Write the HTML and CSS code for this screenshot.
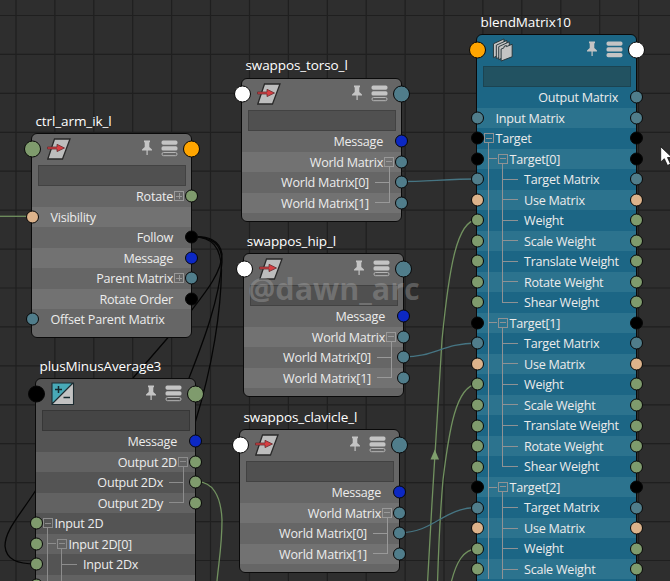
FILE: index.html
```
<!DOCTYPE html>
<html lang="en">
<head>
<meta charset="utf-8">
<title>Node Editor</title>
<link rel="stylesheet" href="styles.css">
</head>
<body>
<svg class="defs" width="0" height="0" aria-hidden="true">
  <symbol id="transform" viewBox="0 0 24 22">
    <path d="M7.500 1H23L15.500 21H.8Z" fill="#bdbdbd" stroke="#292929" stroke-width="1.300"/>
    <path d="M.5 9H10V6.300L17.500 10 10 13.600V11H.5Z" fill="#d83e42" stroke="#662c2e" stroke-width=".8"/>
  </symbol>
  <symbol id="plusminus" viewBox="0 0 24 24">
    <path d="M1 1H22V22H1Z" fill="#c2c2c2"/>
    <path d="M1 1H22L1 22Z" fill="#48a9b7"/>
    <path d="M1 1H22.500V22.500H1ZM22 1L1 22" fill="none" stroke="#1c2b30" stroke-width="1.100"/>
    <path d="M4 7.500H11M7.500 4V11M12.500 15.500H19" fill="none" stroke="#15282d" stroke-width="1.500"/>
  </symbol>
  <symbol id="layers" viewBox="0 0 24 25">
    <g fill="#c4c4c4" stroke="#26343a" stroke-width="1">
      <path d="M1 6L12 1V15L1 20.500Z"/>
      <path d="M4 7.500L15 2.500V17L4 21.500Z"/>
      <path d="M6.500 9L17.500 4V18L6.500 22.500Z"/>
      <path d="M9 11.500L12 10.200V8.800L14.500 7.800V9L20.500 6.500V19.500L9 24Z"/>
    </g>
  </symbol>
  <symbol id="pin" viewBox="0 0 10 16">
    <path d="M2 .5H8V2L7.300 2.500V7L10 9.500V10.500H5.700V15H4.500V10.500H0V9.500L2.700 7V2.500L2 2Z" fill="#c4c4c4"/>
  </symbol>
  <symbol id="list" viewBox="0 0 17 17">
    <rect x=".5" y=".5" width="16" height="4.300" rx="1.700" fill="#c4c4c4"/>
    <rect x=".5" y="6.300" width="16" height="4.300" rx="1.700" fill="#c4c4c4"/>
    <rect x="1" y="12.500" width="15" height="3.200" rx="1.500" fill="none" stroke="#b5b5b5"/>
  </symbol>
  <symbol id="list-full" viewBox="0 0 17 17">
    <rect x=".5" y=".5" width="16" height="4.300" rx="1.700" fill="#c4c4c4"/>
    <rect x=".5" y="6.300" width="16" height="4.300" rx="1.700" fill="#c4c4c4"/>
    <rect x=".5" y="12" width="16" height="4.300" rx="1.700" fill="#c4c4c4"/>
  </symbol>
</svg>

<main class="canvas">
  <svg class="edges" viewBox="0 0 670 581" width="670" height="581">
    <path class="grid" d="M16 0V581M54.900 0V581M93.800 0V581M132.700 0V581M171.600 0V581M210.500 0V581M249.500 0V581M288.400 0V581M327.300 0V581M366.200 0V581M405.100 0V581M444 0V581M482.900 0V581M521.800 0V581M560.800 0V581M599.700 0V581M638.600 0V581M0 15.500H670M0 54.400H670M0 93.400H670M0 132.300H670M0 171.200H670M0 210.200H670M0 249.100H670M0 288H670M0 326.900H670M0 365.900H670M0 404.800H670M0 443.700H670M0 482.700H670M0 521.600H670M0 560.500H670"/>
    <g class="wire green">
      <path d="M0 216.300H31"/>
      <path d="M196 482C212 481 221 495 222 520C222 545 219 560 217 581"/>
      <path d="M477 220C457 220 449 268 442 340C438 400 432 500 427.500 583"/>
      <path d="M477 384C456 386 449 430 443 480C439.500 520 438.500 550 437.500 583"/>
      <path d="M477 549C463 549 456 563 451 583"/>
    </g>
    <path class="arrow" d="M434.800 449.500L439 459.500H430.500Z"/>
    <g class="wire teal-wire">
      <path d="M401 181.500C425 181.500 450 179 477 179"/>
      <path d="M403 357C435 357 442 343.500 477 343"/>
      <path d="M399 532.700C435 532.700 442 508 477 507.500"/>
    </g>
    <g class="wire black-wire">
      <path d="M191 237C207 235 220 240 222 254C222 272 205 293 191 311L133 378"/>
      <path d="M191 237C212 236 222 244 222 262C219 300 204 340 189 378"/>
      <path d="M191 237C213 236 221 248 221.500 270C221 310 213 365 195 423"/>
      <path d="M36 490C20 515 5 530 5 546C6 560 18 564 36 564"/>
    </g>
  </svg>

  <section class="node ctrl">
    <h2>ctrl_arm_ik_l</h2>
    <header><i class="port in green"></i><svg class="kind"><use href="#transform"/></svg><svg class="pin"><use href="#pin"/></svg><svg class="list"><use href="#list"/></svg><i class="port out orange"></i></header>
    <div class="field"></div>
    <div class="rows">
      <div class="row"><span class="label r0">Rotate</span><i class="box plus right"></i><i class="port out green"></i></div>
      <div class="row"><i class="port in peach"></i><span class="label l0">Visibility</span></div>
      <div class="row"><span class="label r0">Follow</span><i class="port out black"></i></div>
      <div class="row"><span class="label r0">Message</span><i class="port out blue"></i></div>
      <div class="row"><span class="label r0">Parent Matrix</span><i class="box plus right"></i><i class="port out teal"></i></div>
      <div class="row"><span class="label r0">Rotate Order</span><i class="port out black"></i></div>
      <div class="row"><i class="port in teal"></i><span class="label l0">Offset Parent Matrix</span></div>
    </div>
  </section>

  <section class="node plus-minus dark">
    <h2>plusMinusAverage3</h2>
    <header><i class="port in black"></i><svg class="kind"><use href="#plusminus"/></svg><svg class="pin"><use href="#pin"/></svg><svg class="list"><use href="#list"/></svg><i class="port out green"></i></header>
    <div class="field"></div>
    <div class="rows">
      <div class="row"><span class="label r0">Message</span><i class="port out blue"></i></div>
      <div class="row"><span class="label r0">Output 2D</span><i class="stub right"></i><i class="box right"></i><i class="port out green"></i></div>
      <div class="row"><span class="label r1">Output 2Dx</span><i class="branch right"></i><i class="port out green"></i></div>
      <div class="row"><span class="label r1">Output 2Dy</span><i class="branch right last"></i><i class="port out green"></i></div>
      <div class="row"><i class="port in green"></i><i class="stub"></i><i class="box"></i><span class="label l0">Input 2D</span></div>
      <div class="row"><i class="port in green"></i><i class="branch outer"></i><i class="stub deep"></i><i class="box deep"></i><span class="label l1">Input 2D[0]</span></div>
      <div class="row trunk"><i class="port in green"></i><i class="branch"></i><span class="label l2">Input 2Dx</span></div>
      <div class="row trunk"><i class="port in green"></i><i class="branch"></i></div>
    </div>
  </section>

  <section class="node torso">
    <h2>swappos_torso_l</h2>
    <header><i class="port in white"></i><svg class="kind"><use href="#transform"/></svg><svg class="pin"><use href="#pin"/></svg><svg class="list"><use href="#list"/></svg><i class="port out teal"></i></header>
    <div class="field"></div>
    <div class="rows">
      <div class="row"><span class="label r0">Message</span><i class="port out blue"></i></div>
      <div class="row"><span class="label r0">World Matrix</span><i class="stub right"></i><i class="box right"></i><i class="port out teal"></i></div>
      <div class="row"><span class="label r1">World Matrix[0]</span><i class="branch right"></i><i class="port out teal"></i></div>
      <div class="row"><span class="label r1">World Matrix[1]</span><i class="branch right last"></i><i class="port out teal"></i></div>
    </div>
  </section>

  <section class="node hip">
    <h2>swappos_hip_l</h2>
    <header><i class="port in white"></i><svg class="kind"><use href="#transform"/></svg><svg class="pin"><use href="#pin"/></svg><svg class="list"><use href="#list"/></svg><i class="port out teal"></i></header>
    <div class="field"></div>
    <div class="rows">
      <div class="row"><span class="label r0">Message</span><i class="port out blue"></i></div>
      <div class="row"><span class="label r0">World Matrix</span><i class="stub right"></i><i class="box right"></i><i class="port out teal"></i></div>
      <div class="row"><span class="label r1">World Matrix[0]</span><i class="branch right"></i><i class="port out teal"></i></div>
      <div class="row"><span class="label r1">World Matrix[1]</span><i class="branch right last"></i><i class="port out teal"></i></div>
    </div>
  </section>

  <section class="node clavicle">
    <h2>swappos_clavicle_l</h2>
    <header><i class="port in white"></i><svg class="kind"><use href="#transform"/></svg><svg class="pin"><use href="#pin"/></svg><svg class="list"><use href="#list"/></svg><i class="port out teal"></i></header>
    <div class="field"></div>
    <div class="rows">
      <div class="row"><span class="label r0">Message</span><i class="port out blue"></i></div>
      <div class="row"><span class="label r0">World Matrix</span><i class="stub right"></i><i class="box right"></i><i class="port out teal"></i></div>
      <div class="row"><span class="label r1">World Matrix[0]</span><i class="branch right"></i><i class="port out teal"></i></div>
      <div class="row"><span class="label r1">World Matrix[1]</span><i class="branch right last"></i><i class="port out teal"></i></div>
    </div>
  </section>

  <section class="node blend">
    <h2>blendMatrix10</h2>
    <header><i class="port in orange"></i><svg class="kind"><use href="#layers"/></svg><svg class="pin"><use href="#pin"/></svg><svg class="list"><use href="#list-full"/></svg><i class="port out white"></i></header>
    <div class="field"></div>
    <div class="rows">
      <div class="row"><span class="label r0">Output Matrix</span><i class="port out teal"></i></div>
      <div class="row"><i class="port in teal"></i><span class="label l0">Input Matrix</span><i class="port out teal"></i></div>
      <div class="row"><i class="port in black"></i><i class="stub"></i><i class="box"></i><span class="label l0">Target</span><i class="port out black"></i></div>
      <div class="row"><i class="port in black"></i><i class="branch outer"></i><i class="stub deep"></i><i class="box deep"></i><span class="label l1">Target[0]</span><i class="port out black"></i></div>
      <div class="row trunk"><i class="port in teal"></i><i class="branch"></i><span class="label l2">Target Matrix</span><i class="port out teal"></i></div>
      <div class="row trunk"><i class="port in peach"></i><i class="branch"></i><span class="label l2">Use Matrix</span><i class="port out peach"></i></div>
      <div class="row trunk"><i class="port in green"></i><i class="branch"></i><span class="label l2">Weight</span><i class="port out green"></i></div>
      <div class="row trunk"><i class="port in green"></i><i class="branch"></i><span class="label l2">Scale Weight</span><i class="port out green"></i></div>
      <div class="row trunk"><i class="port in green"></i><i class="branch"></i><span class="label l2">Translate Weight</span><i class="port out green"></i></div>
      <div class="row trunk"><i class="port in green"></i><i class="branch"></i><span class="label l2">Rotate Weight</span><i class="port out green"></i></div>
      <div class="row trunk"><i class="port in green"></i><i class="branch last"></i><span class="label l2">Shear Weight</span><i class="port out green"></i></div>
      <div class="row"><i class="port in black"></i><i class="branch outer"></i><i class="stub deep"></i><i class="box deep"></i><span class="label l1">Target[1]</span><i class="port out black"></i></div>
      <div class="row trunk"><i class="port in teal"></i><i class="branch"></i><span class="label l2">Target Matrix</span><i class="port out teal"></i></div>
      <div class="row trunk"><i class="port in peach"></i><i class="branch"></i><span class="label l2">Use Matrix</span><i class="port out peach"></i></div>
      <div class="row trunk"><i class="port in green"></i><i class="branch"></i><span class="label l2">Weight</span><i class="port out green"></i></div>
      <div class="row trunk"><i class="port in green"></i><i class="branch"></i><span class="label l2">Scale Weight</span><i class="port out green"></i></div>
      <div class="row trunk"><i class="port in green"></i><i class="branch"></i><span class="label l2">Translate Weight</span><i class="port out green"></i></div>
      <div class="row trunk"><i class="port in green"></i><i class="branch"></i><span class="label l2">Rotate Weight</span><i class="port out green"></i></div>
      <div class="row trunk"><i class="port in green"></i><i class="branch last"></i><span class="label l2">Shear Weight</span><i class="port out green"></i></div>
      <div class="row"><i class="port in black"></i><i class="branch outer"></i><i class="stub deep"></i><i class="box deep"></i><span class="label l1">Target[2]</span><i class="port out black"></i></div>
      <div class="row trunk"><i class="port in teal"></i><i class="branch"></i><span class="label l2">Target Matrix</span><i class="port out teal"></i></div>
      <div class="row trunk"><i class="port in peach"></i><i class="branch"></i><span class="label l2">Use Matrix</span><i class="port out peach"></i></div>
      <div class="row trunk"><i class="port in green"></i><i class="branch"></i><span class="label l2">Weight</span><i class="port out green"></i></div>
      <div class="row trunk"><i class="port in green"></i><i class="branch"></i><span class="label l2">Scale Weight</span><i class="port out green"></i></div>
    </div>
  </section>

  <div class="watermark">@dawn_arc</div>
  <svg class="cursor" viewBox="0 0 12 21" width="12" height="21"><path d="M.7 .7V16L4.300 12.700 7.500 19.500 10.500 18 7.500 11.500H12Z" fill="#fff" stroke="#111" stroke-width=".8"/></svg>
</main>
</body>
</html>
```
FILE: styles.css
```
* { box-sizing: border-box; }

body {
  margin: 0;
  overflow: hidden;
  background: #2e2e2e;
  font-family: "Open Sans", "Noto Sans", sans-serif;
  color: #ececec;
}

.defs { position: absolute; }

.canvas {
  position: relative;
  width: 670px;
  height: 581px;
  overflow: hidden;
}

.edges { position: absolute; inset: 0; }
.grid { fill: none; stroke: #1f1f1f; stroke-width: 1.2; }
.wire { fill: none; stroke-width: 1.3; }
.wire.green { stroke: #71915f; }
.arrow { fill: #7f9f6d; }
.teal-wire { stroke: #467583; }
.black-wire { stroke: #050505; }

.node {
  --base: #666;
  --alt: #727272;
  --field: #505050;
  --field-line: #424242;
  --line: #999;
  position: absolute;
  width: 161px;
  border: 1.500px solid #0a0a0a;
  border-radius: 6px;
  background: var(--base);
}
.dark { --base: #545454; --alt: #626262; --field: #454545; --field-line: #373737; --line: #8c8c8c; }
.blend { --base: #1c6685; --alt: #2c738e; --field: #225261; --field-line: #1b4452; --line: #8f9294; }

.ctrl { left: 31px; top: 133px; height: 205px; }
.plus-minus { left: 35px; top: 378px; height: 240px; }
.torso { left: 241px; top: 78px; height: 144px; }
.hip { left: 243px; top: 253px; height: 144px; }
.clavicle { left: 239px; top: 429px; height: 144px; }
.blend { left: 476px; top: 34px; height: 580px; }

.node h2 {
  position: absolute;
  left: 3.500px;
  bottom: calc(100% + 4px);
  margin: 0;
  font-size: 13.500px;
  line-height: 18px;
  font-weight: 400;
  letter-spacing: -.1px;
  white-space: nowrap;
  color: #fff;
}
.node.torso h2 { bottom: calc(100% + 5px); }
.node.hip h2 { left: 2.800px; }

header {
  position: relative;
  display: flex;
  align-items: center;
  height: 31px;
  padding: 0 13px 0 15px;
}
.kind { width: 24px; height: 24px; margin-top: -1px; }
.pin { width: 10px; height: 16px; margin-left: auto; margin-right: 9px; margin-top: -3px; }
.list { width: 17px; height: 17px; margin-top: -3px; }

.field {
  height: 21px;
  margin: 0 5.500px;
  border: 1.200px solid var(--field-line);
  background: var(--field);
}

.row {
  position: relative;
  display: flex;
  align-items: center;
  height: 20.530px;
}
.row:nth-child(even) { background: var(--alt); }

.label {
  padding-top: 1.500px;
  font-size: 12.600px;
  line-height: 20px;
  letter-spacing: -.25px;
  white-space: nowrap;
}
.l0 { margin-left: 18.500px; }
.l1 { margin-left: 32.500px; }
.l2 { margin-left: 47px; }
.r0 { margin-left: auto; margin-right: 18px; }
.r1 { margin-left: auto; margin-right: 32px; }

.port {
  position: absolute;
  top: 50%;
  width: 13px;
  height: 13px;
  border: 1.300px solid #070707;
  border-radius: 50%;
  transform: translateY(-50%);
  z-index: 1;
}
.port.in { left: -6.500px; }
.port.out { right: -7px; }
header .port { top: 15px; width: 17px; height: 17px; }
header .port.in { left: -8.500px; }
header .port.out { right: -9px; }
.port.green { background: #7f9b6d; }
.port.orange { background: #ffa500; }
.port.peach { background: #ddb38b; }
.port.black { background: #000; }
.port.blue { background: #0c28c4; }
.port.teal { background: #507d8b; }
.port.white { background: #fff; }

.box {
  position: absolute;
  left: 6.500px;
  top: 5px;
  width: 10px;
  height: 10px;
  border: 1px solid var(--line);
  background: linear-gradient(var(--line), var(--line)) center / 6px 1px no-repeat;
}
.box.plus {
  background:
    linear-gradient(var(--line), var(--line)) center / 6px 1px no-repeat,
    linear-gradient(var(--line), var(--line)) center / 1px 6px no-repeat;
}
.box.deep { left: 20.500px; }
.box.right { left: auto; right: 7px; }

.branch {
  position: absolute;
  left: 25px;
  top: 0;
  width: 16px;
  height: 100%;
  background:
    linear-gradient(var(--line), var(--line)) 0 0 / 1px 100% no-repeat,
    linear-gradient(var(--line), var(--line)) 0 50% / 100% 1px no-repeat;
}
.branch.outer { left: 11px; width: 9px; }
.branch.right {
  left: auto;
  right: 11px;
  width: 15px;
  background-position: 100% 0, 0 50%;
}
.branch.last { background-size: 1px 52%, 100% 1px; }

.stub {
  position: absolute;
  left: 11px;
  top: 15px;
  bottom: 0;
  width: 1px;
  background: var(--line);
}
.stub.deep { left: 25px; }
.stub.right { left: auto; right: 11px; }

.trunk::before,
.branch.outer::before {
  content: "";
  position: absolute;
  left: 11px;
  top: 0;
  width: 1px;
  height: 100%;
  background: var(--line);
}
.branch.outer::before { left: 0; }

.watermark {
  position: absolute;
  left: 248px;
  top: 267px;
  font-size: 30.500px;
  line-height: 42px;
  font-weight: 700;
  white-space: nowrap;
  color: rgba(170, 170, 170, .38);
}

.cursor { position: absolute; left: 660px; top: 146px; }
```
